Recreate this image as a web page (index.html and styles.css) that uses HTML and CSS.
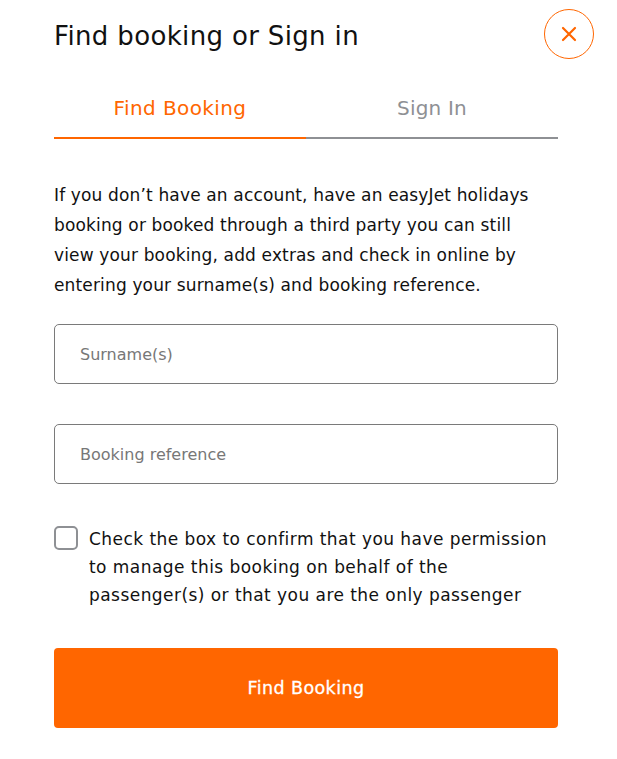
FILE: index.html
```html
<!DOCTYPE html>
<html>
<head>
<meta charset="utf-8">
<link rel="stylesheet" href="styles.css">
</head>
<body>
<div class="panel">
  <div class="header">
    <h1 class="title">Find booking or Sign in</h1>
    <button class="close" aria-label="Close">
      <svg width="16" height="16" viewBox="0 0 16 16"><path d="M2 2 L14 14 M14 2 L2 14" stroke="#ff6600" stroke-width="2.2" stroke-linecap="round" fill="none"/></svg>
    </button>
  </div>
  <div class="tabs">
    <div class="tab active">Find Booking</div>
    <div class="tab">Sign In</div>
  </div>
  <p class="intro">If you don’t have an account, have an easyJet holidays booking or booked through a third party you can still view your booking, add extras and check in online by entering your surname(s) and booking reference.</p>
  <div class="field"><input class="input" type="text" placeholder="Surname(s)"></div>
  <div class="field"><input class="input" type="text" placeholder="Booking reference"></div>
  <label class="consent">
    <span class="box"></span>
    <span class="consent-text">Check the box to confirm that you have permission to manage this booking on behalf of the passenger(s) or that you are the only passenger</span>
  </label>
  <button class="submit">Find Booking</button>
</div>
</body>
</html>
```
FILE: styles.css
```css
* { box-sizing: border-box; }
html, body { margin: 0; padding: 0; background: #fff; }
body { font-family: "DejaVu Sans", "Open Sans", sans-serif; color: #1a1a1a; }
.panel { padding: 9px 23px 0 54px; width: 617px; }
.header { display: flex; justify-content: space-between; align-items: center; height: 50px; }
.title { margin: 0; padding-top: 3px; font-size: 26px; font-weight: 400; color: #111; letter-spacing: 0.35px; }
.close { width: 50px; height: 50px; border-radius: 50%; border: 1px solid #ff6600; background: #fff; display: flex; align-items: center; justify-content: center; padding: 0; }
.tabs { display: flex; width: 504px; margin-top: 25px; }
.tab { flex: 1; text-align: center; font-size: 20px; color: #8e9094; padding: 12px 0 17px; border-bottom: 2px solid #8e9094; letter-spacing: 0.2px; }
.tab.active { color: #ff6600; border-bottom-color: #ff6600; letter-spacing: 0.4px; }
.intro { width: 492px; margin: 41px 0 0; font-size: 17px; line-height: 30px; color: #111; letter-spacing: 0.15px; }
.field { width: 504px; margin-top: 40px; }
.intro + .field { margin-top: 24px; }
.input { width: 100%; height: 60px; border: 1px solid #7a7a7a; border-radius: 5px; padding: 0 25px; font-family: inherit; font-size: 16px; color: #333; }
.input::placeholder { color: #777; }
.consent { display: flex; width: 504px; margin-top: 41px; gap: 11px; }
.box { flex: none; width: 24px; height: 24px; border: 2px solid #8e9094; border-radius: 5px; margin-top: 1px; }
.consent-text { max-width: 464px; font-size: 17px; line-height: 28px; color: #111; margin-top: 0; letter-spacing: 0.45px; }
.submit { display: block; width: 504px; height: 80px; margin-top: 39px; border: 0; border-radius: 4px; background: #ff6600; color: #fff; font-family: inherit; font-size: 17.5px; font-weight: 400; letter-spacing: 0.4px; -webkit-text-stroke: 0.3px #fff; }
```
